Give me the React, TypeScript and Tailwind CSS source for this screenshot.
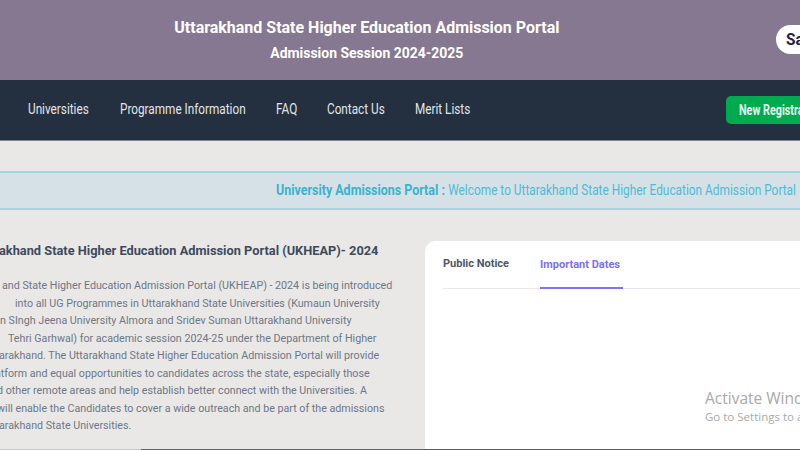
import React from "react";

const rob = { fontFamily: 'Roboto, "Noto Sans", sans-serif' };

const lines: { t: string; c: string }[] = [
  { t: "and State Higher Education Admission Portal (UKHEAP) - 2024 is being introduced", c: "pl-[2px]" },
  { t: "into all UG Programmes in Uttarakhand State Universities (Kumaun University", c: "pl-[15px]" },
  { t: "n SIngh Jeena University Almora and Sridev Suman Uttarakhand University", c: "pl-0" },
  { t: "Tehri Garhwal) for academic session 2024-25 under the Department of Higher", c: "pl-[8px]" },
  { t: "arakhand. The Uttarakhand State Higher Education Admission Portal will provide", c: "-ml-[1px]" },
  { t: "atform and equal opportunities to candidates across the state, especially those", c: "-ml-[5px]" },
  { t: "d other remote areas and help establish better connect with the Universities. A", c: "-ml-[3px]" },
  { t: "will enable the Candidates to cover a wide outreach and be part of the admissions", c: "-ml-[3px]" },
  { t: "arakhand State Universities.", c: "-ml-[1px]" },
];

function Nav({ w, children }: { w: string; children: React.ReactNode }) {
  return (
    <div className={`${w} shrink-0 whitespace-nowrap`}>
      <span className="inline-block origin-left scale-x-[0.84]">{children}</span>
    </div>
  );
}

export default function App() {
  return (
    <div className="relative w-[800px] h-[450px] overflow-hidden bg-[#e9e8e7]" style={rob}>
      {/* Header */}
      <div className="h-[80px] bg-[#877891] flex items-center">
        <div className="w-[733px] shrink-0 flex flex-col items-center text-white font-bold whitespace-nowrap">
          <div className="text-[17px] leading-[20px] mt-[-2px] scale-x-[0.94]">Uttarakhand State Higher Education Admission Portal</div>
          <div className="text-[15px] leading-[18px] mt-[7px] scale-x-[0.93]">Admission Session 2024-2025</div>
        </div>
        <div className="ml-[43px] h-[29px] w-[60px] shrink-0 rounded-full bg-white flex items-center pl-[10px] text-[17px] font-bold text-[#1d2242] mt-[-1px]">
          <span className="inline-block origin-left scale-x-[0.9]">Sa</span>
        </div>
      </div>

      {/* Nav */}
      <div className="h-[61px] bg-[#242f3f] border-b border-[#7e8590] flex items-center">
        <div className="flex items-center pl-[28px] text-[14px] text-[#e2e6ea] pb-[1px]">
          <Nav w="w-[92px]">Universities</Nav>
          <Nav w="w-[156px]">Programme Information</Nav>
          <Nav w="w-[51px]">FAQ</Nav>
          <Nav w="w-[88px]">Contact Us</Nav>
          <Nav w="w-[80px]">Merit Lists</Nav>
        </div>
        <div className="ml-auto mr-[-40px] h-[28px] w-[114px] shrink-0 rounded-[5px] bg-[#00ab4f] flex items-center pl-[13px] text-[14px] font-bold text-[#e9f7ec] whitespace-nowrap">
          <span className="inline-block origin-left scale-x-[0.77]">New Registration</span>
        </div>
      </div>

      {/* Banner */}
      <div className="mt-[30px] h-[39px] bg-[#d5e1e6] border-y-2 border-[#a6d5e1] flex items-center pl-[276px] whitespace-nowrap text-[15px] text-[#4ebbd5]">
        <span className="inline-block origin-left scale-x-[0.83]">
          <span className="font-bold text-[#3cb1ce]">University Admissions Portal :</span>
          <span className="ml-[4px] text-[14.3px]">Welcome to Uttarakhand State Higher Education Admission Portal</span>
        </span>
      </div>

      {/* Content */}
      <div className="flex mt-[31px]">
        <div className="w-[425px] shrink-0 pt-[1px]">
          <div className="text-[12.8px] leading-[18px] font-bold text-[#3d4a5d] whitespace-nowrap -ml-[1px]">
            akhand State Higher Education Admission Portal (UKHEAP)- 2024
          </div>
          <div className="mt-[17px] text-[10.7px] leading-[17.5px] text-[#6d7786] whitespace-nowrap">
            {lines.map((l, i) => (
              <div key={i} className={l.c}>{l.t}</div>
            ))}
          </div>
        </div>
        <div className="flex-1 h-[220px] bg-white rounded-tl-[10px] pl-[18px]">
          <div className="flex border-b border-[#e8e8ee] h-[48px] items-end gap-[31px] text-[11px] font-bold">
            <div className="h-full flex items-center text-[#4d5666] pb-[1px]">Public Notice</div>
            <div className="h-full flex items-center text-[#7c70f5] border-b-2 border-[#7c74f8] mb-[-1px] pt-[1px] pr-[3px]">Important Dates</div>
          </div>
        </div>
      </div>

      {/* Windows watermark */}
      <div className="absolute left-[705px] top-[388px] text-[#a9a9a9] whitespace-nowrap" style={{ fontFamily: '"Open Sans", "Noto Sans", sans-serif' }}>
        <div className="text-[15.5px] leading-[20px]">Activate Windows</div>
        <div className="text-[11.5px] leading-[16px] mt-[1px]">Go to Settings to activate Windows.</div>
      </div>

      {/* bottom edge */}
      <div className="absolute left-0 bottom-0 w-full h-[1px] flex">
        <div className="w-[141px] bg-[#c9c8c6]" />
        <div className="flex-1 bg-[#5f6063]" />
      </div>
    </div>
  );
}
